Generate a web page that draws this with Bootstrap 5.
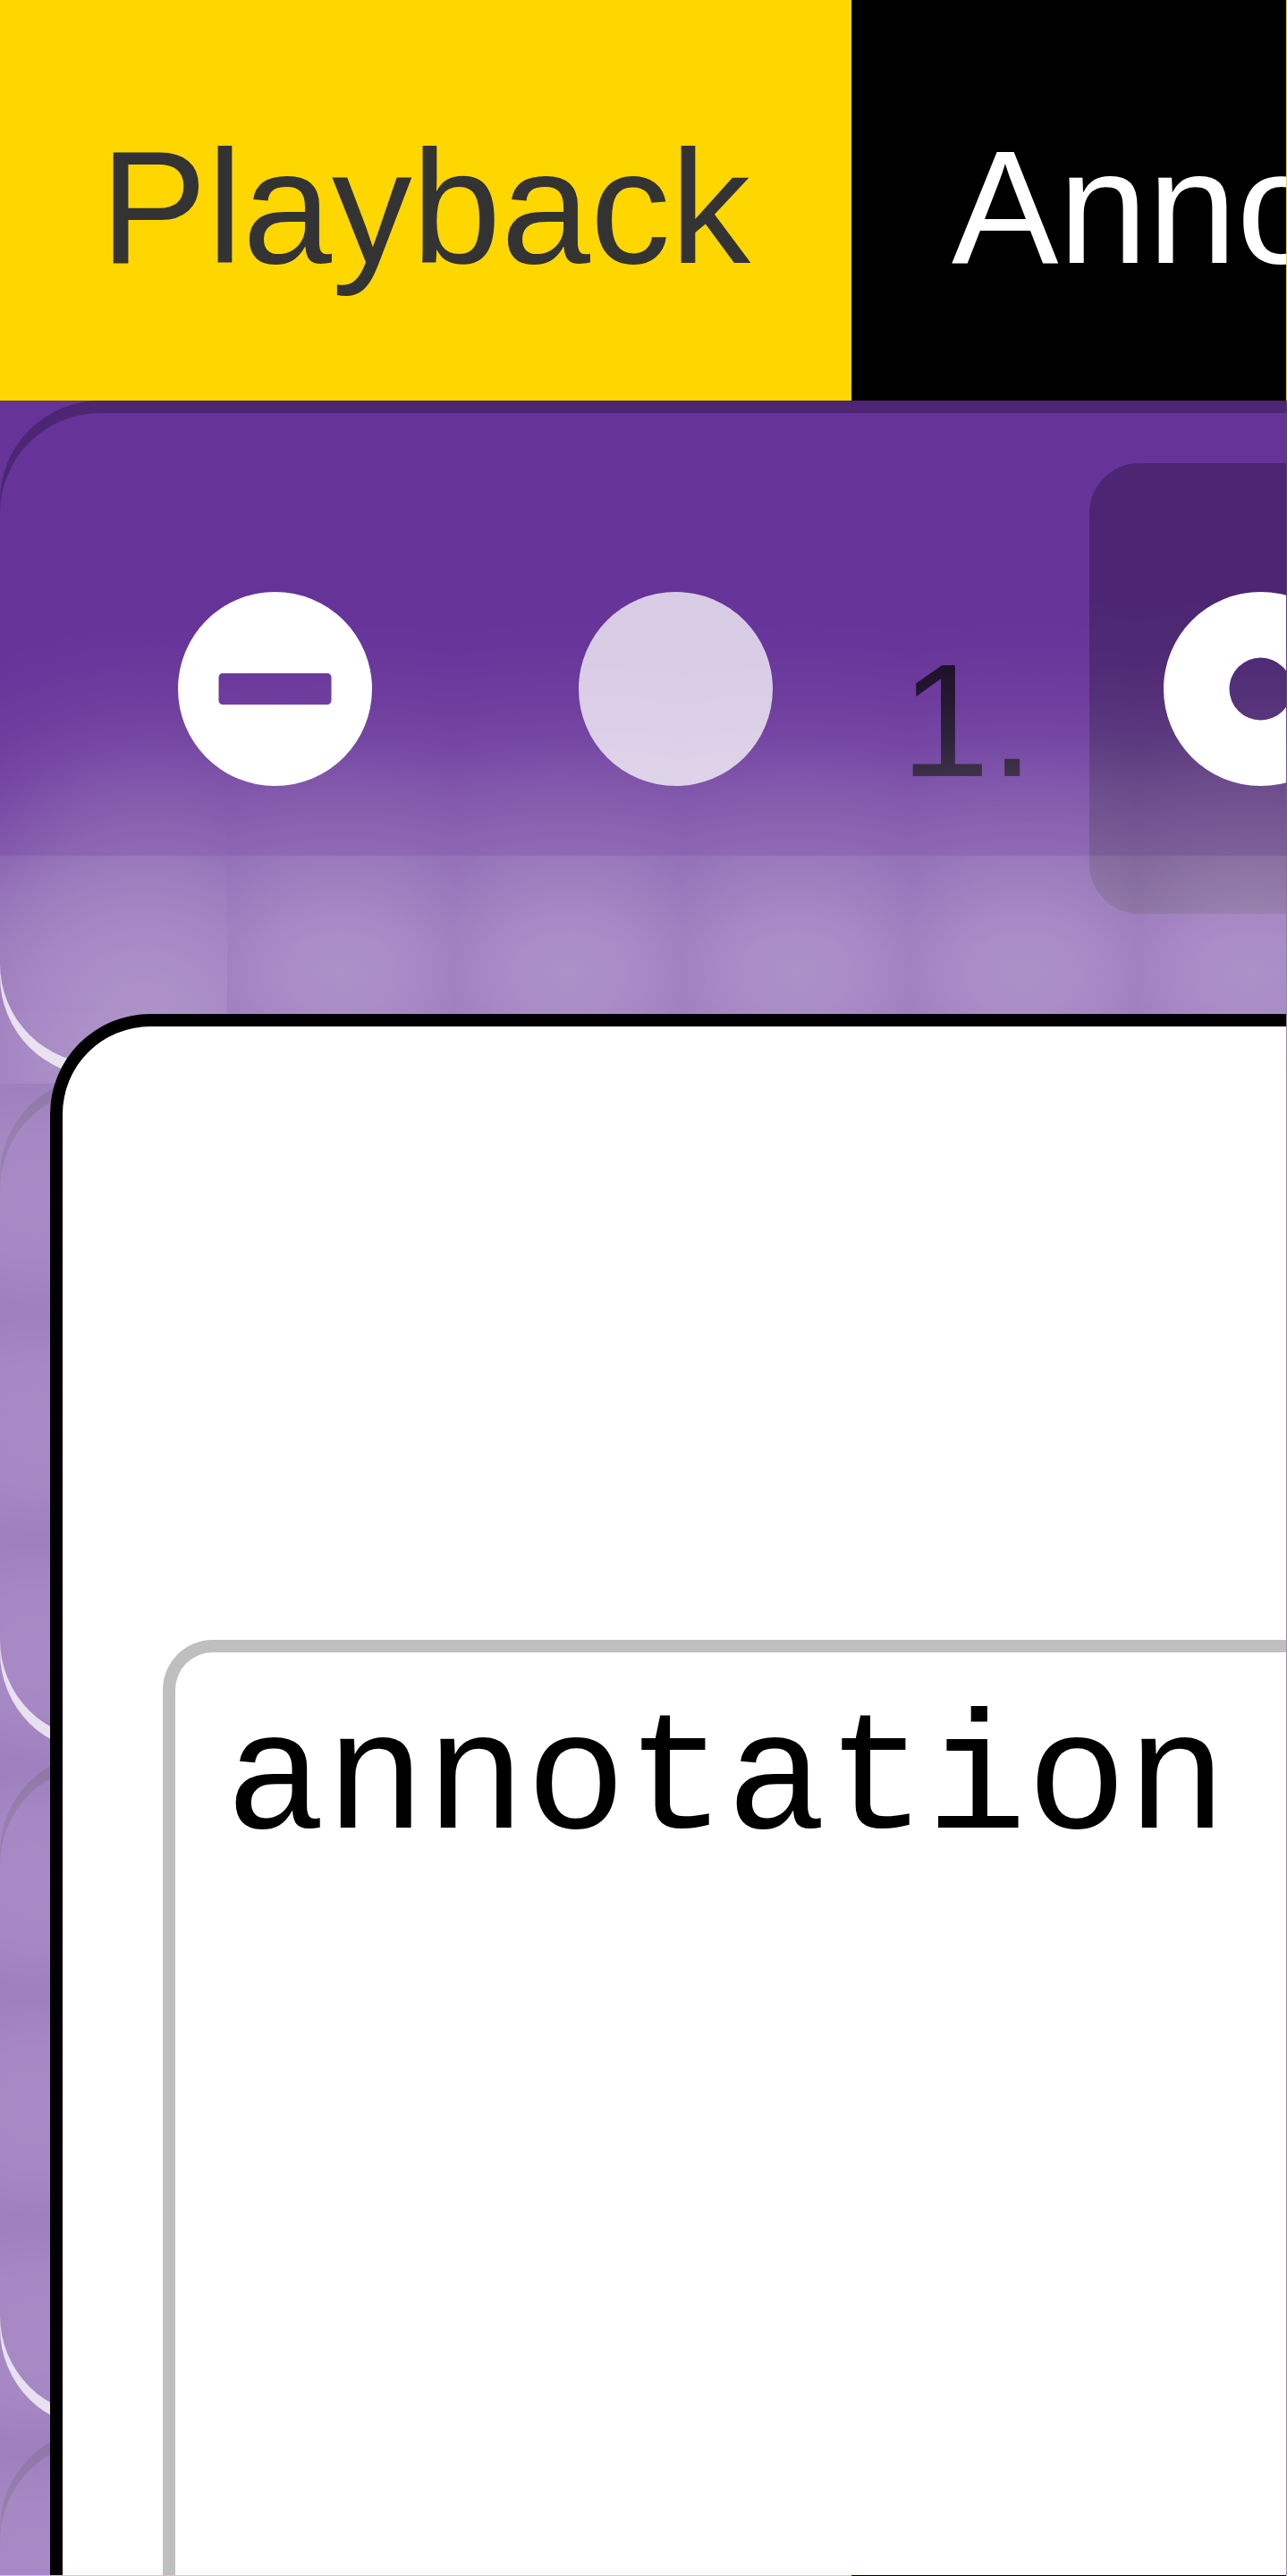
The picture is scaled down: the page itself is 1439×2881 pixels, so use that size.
<!DOCTYPE html>
<html lang="en">
<head>
<meta charset="utf-8">
<meta name="viewport" content="width=device-width, initial-scale=1">
<title>Annotations</title>
<link href="https://cdn.jsdelivr.net/npm/bootstrap@5.3.0/dist/css/bootstrap.min.css" rel="stylesheet">
<style>
html, body { height: 2881px; overflow: hidden; }
body { background: #663399; font-family: "Liberation Sans", Arial, sans-serif; font-size: 179.2px; line-height: 1; }
.stage { width: 1438px; height: 2880px; }
.tabbar { height: 448px; background: #000; flex: none; flex-wrap: nowrap; }
.tabbar .nav-link { flex: none; height: 448px; padding: 129px 112px 0; color: #fff; border-radius: 0; line-height: 206px; white-space: nowrap; }
.tabbar .nav-link.active { width: 952px; color: #333; background: #ffd700; }
.track { height: 756px; flex: none; border-radius: 112px 0 0 112px;
  box-shadow: inset 0 14px rgba(0,0,0,.25), inset 0 -14px rgba(255,255,255,.75); }
.tools { padding: 70px 0 0 84px; }
.tool { width: 448px; height: 504px; flex: none; }
.tool svg { width: 217px; height: 217px; display: block; }
.first-tool { padding: 144px 0 0 115px; }
.second-tool { padding: 144px 0 0 115px; opacity: .75; }
.num-label { width: 238px; flex: none; padding: 185px 0 0 27px; color: rgba(0,0,0,.75); line-height: 206px; height: 504px; }
.third-tool { background: rgba(0,0,0,.25); border-radius: 56px; padding: 143.500px 0 0 83px; }
.haze { inset: 448px 0 0 0; pointer-events: none; }
.haze-col { width: 254.400px; flex: none; }
.haze-top { height: 509px; }
.haze-mid { height: 255px; }
.haze-col .haze-top { background: radial-gradient(circle 460px at 175px 682px, rgba(255,255,255,.27) 173px, rgba(255,255,255,.24) 205px, rgba(255,255,255,.175) 254px, rgba(255,255,255,.1) 302px, rgba(255,255,255,.05) 350px, rgba(255,255,255,.02) 400px, rgba(255,255,255,0) 460px); }
.haze-col .haze-mid { background:
  linear-gradient(rgba(255,255,255,0) 65%, rgba(255,255,255,.06)),
  radial-gradient(ellipse 278px 232px at 160px 178px, rgba(255,255,255,.47), rgba(255,255,255,.445) 28%, rgba(255,255,255,.41) 48%, rgba(255,255,255,.375) 63%, rgba(255,255,255,.335) 77%, rgba(255,255,255,.23) 100%); }
.haze-rest .haze-top { background: radial-gradient(ellipse 714px 420px at 127px 637px, rgba(255,255,255,.27) 30.500%, rgba(255,255,255,.24) 38%, rgba(255,255,255,.175) 50%, rgba(255,255,255,.1) 61%, rgba(255,255,255,.05) 72.500%, rgba(255,255,255,.02) 84.500%, rgba(255,255,255,0) 100%) 0 0 / 254.400px 509px; }
.haze-rest .haze-mid { background: radial-gradient(ellipse 218px 160px at 127px 132px, rgba(255,255,255,.455), rgba(255,255,255,.443) 25%, rgba(255,255,255,.42) 43%, rgba(255,255,255,.385) 61%, rgba(255,255,255,.345) 80%, rgba(255,255,255,.3)) 0 0 / 254.400px 255px; }
.haze-low { height: 1669px; background: radial-gradient(circle at 38px 127px, rgba(255,255,255,.43), rgba(255,255,255,.415) 70px, rgba(255,255,255,.375) 127px) 0 0 / 1439px 254.600px; }
.sheet { left: 56px; right: 0; top: 1134px; bottom: 0; background: #fff; border: 14px solid #000; border-width: 14px 0 0 14px; border-top-left-radius: 112px; padding: 686px 0 0 112px; }
.note { width: 100%; height: 1100px; background: #fff; color: #000; border: 14px solid #bfbfbf; border-width: 14px 0 0 14px; border-top-left-radius: 56px; padding: 41px 0 0 56px; font: 186.670px/211px "Liberation Mono", monospace; white-space: nowrap; }
.edge-right { left: 1438px; top: 0; width: 1px; height: 2881px; background: linear-gradient(#ffd700 448px, #663399 448px, #663399 720px, #7d52a8 876px, #8456aa 957px, #8c62b4 957px, #9e7fc0 1100px, #a587c4 1212px); }
.edge-bottom { left: 0; top: 2880px; width: 1439px; height: 1px; background: linear-gradient(90deg, #ffd700 952px, #000 952px, #000 1438px, #ffd700 1438px); }
</style>
<script src="https://cdn.jsdelivr.net/npm/bootstrap@5.3.0/dist/js/bootstrap.bundle.min.js"></script>
</head>
<body class="m-0 position-relative">
<main class="stage position-relative overflow-hidden d-flex flex-column">
  <nav class="nav tabbar overflow-hidden">
    <a class="nav-link active" href="#">Playback</a>
    <a class="nav-link" href="#">Annotations</a>
  </nav>
  <section class="track tools d-flex">
    <div class="tool first-tool"><svg viewBox="0 0 217 217" fill="#fff" fill-rule="evenodd"><path d="M108.5 0a108.5 108.5 0 1 0 0 217a108.5 108.5 0 0 0 0-217zM50 91h117a4.500 4.500 0 0 1 4.500 4.500v26a4.500 4.500 0 0 1-4.500 4.500H50a4.500 4.500 0 0 1-4.500-4.500v-26A4.500 4.500 0 0 1 50 91z"/></svg></div>
    <div class="tool second-tool"><svg viewBox="0 0 217 217" fill="#fff"><circle cx="108.5" cy="108.5" r="108.5"/></svg></div>
    <div class="num-label">1.</div>
    <div class="tool third-tool"><svg viewBox="0 0 217 217" fill="#fff" fill-rule="evenodd"><path d="M108.500 0a108.500 108.500 0 1 0 0 217a108.500 108.500 0 0 0 0-217zM108.500 73.500a35 35 0 1 1 0 70a35 35 0 0 1 0-70z"/></svg></div>
  </section>
  <section class="track"></section>
  <section class="track"></section>
  <section class="track"></section>
  <div class="haze position-absolute">
    <div class="d-flex">
      <div class="haze-col"><div class="haze-top"></div><div class="haze-mid"></div></div>
      <div class="haze-rest flex-grow-1"><div class="haze-top"></div><div class="haze-mid"></div></div>
    </div>
    <div class="haze-low"></div>
  </div>
  <div class="sheet position-absolute">
    <div class="note">annotation</div>
  </div>
</main>
<div class="edge-right position-absolute"></div>
<div class="edge-bottom position-absolute"></div>
</body>
</html>
